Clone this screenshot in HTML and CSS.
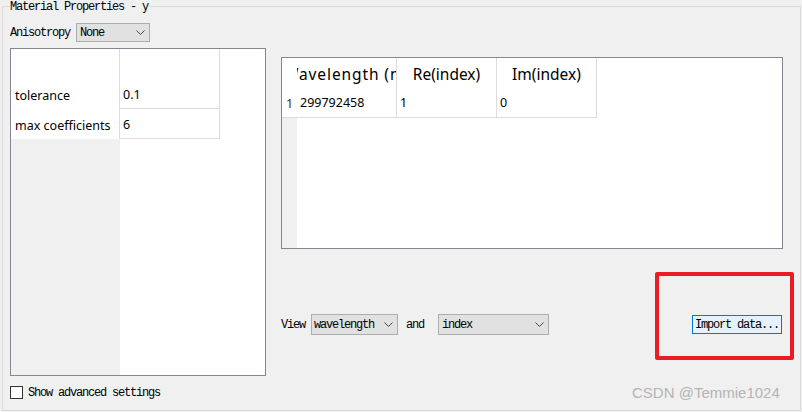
FILE: index.html
```html
<!DOCTYPE html>
<html>
<head>
<meta charset="utf-8">
<link rel="stylesheet" href="styles.css">
</head>
<body>
<div class="group">
  <div class="title">Material Properties - y</div>
  <div class="content">
    <div class="aniso-row">
      <span class="mono">Anisotropy</span>
      <div class="combo combo-aniso"><span class="mono">None</span><svg class="chev" width="9" height="5" viewBox="0 0 9 5"><polyline points="0.5,0.5 4.5,4.5 8.5,0.5" fill="none" stroke="#444" stroke-width="1"/></svg></div>
    </div>
    <div class="main">
      <div class="lp">
        <div class="c1"></div>
        <div class="c2"></div>
        <div class="c3"></div>
        <div class="c1 lbl">tolerance</div>
        <div class="c2 val bb">0.1</div>
        <div class="c3"></div>
        <div class="c1 lbl">max coefficients</div>
        <div class="c2 val bb">6</div>
        <div class="c3"></div>
        <div class="c1 fill"></div>
        <div class="c2 nb"></div>
        <div class="c3"></div>
      </div>
      <div class="right">
        <div class="rt">
          <div class="rvh"></div>
          <div class="rh rh-wl"><span>Wavelength (nm)</span></div>
          <div class="rh"><span>Re(index)</span></div>
          <div class="rh"><span>Im(index)</span></div>
          <div class="rfill"></div>
          <div class="rvh num">1</div>
          <div class="rc">299792458</div>
          <div class="rc">1</div>
          <div class="rc">0</div>
          <div class="rfill"></div>
          <div class="rvh gray"></div>
          <div class="rempty"></div>
        </div>
        <div class="bottom">
          <span class="mono">View</span>
          <div class="combo combo-wl"><span class="mono">wavelength</span><svg class="chev" width="9" height="5" viewBox="0 0 9 5"><polyline points="0.5,0.5 4.5,4.5 8.5,0.5" fill="none" stroke="#444" stroke-width="1"/></svg></div>
          <span class="mono and">and</span>
          <div class="combo combo-idx"><span class="mono">index</span><svg class="chev" width="9" height="5" viewBox="0 0 9 5"><polyline points="0.5,0.5 4.5,4.5 8.5,0.5" fill="none" stroke="#444" stroke-width="1"/></svg></div>
          <div class="btn mono">Import data...</div>
        </div>
      </div>
    </div>
    <div class="chk-row">
      <span class="chk"></span>
      <span class="mono">Show advanced settings</span>
    </div>
  </div>
</div>
<div class="redbox"></div>
<div class="wm">CSDN @Temmie1024</div>
</body>
</html>
```
FILE: styles.css
```css
html, body {
  margin: 0;
  padding: 0;
}
body {
  width: 802px;
  height: 412px;
  overflow: hidden;
  background: #f0f0f0;
  position: relative;
  font-family: "Noto Sans", sans-serif;
  color: #000;
}
.mono {
  font-family: "Liberation Mono", monospace;
  font-size: 12px;
  letter-spacing: -1.2px;
  line-height: 14px;
  white-space: pre;
  color: #000;
}
.group {
  position: relative;
  box-sizing: border-box;
  margin: 6px 1px 0 2px;
  height: 405px;
  border: 1px solid #dcdcdc;
}
.title {
  position: absolute;
  top: -7px;
  left: 7px;
  padding: 0 1px 0 0;
  background: #f0f0f0;
  font-family: "Liberation Mono", monospace;
  font-size: 12px;
  letter-spacing: -1.2px;
  line-height: 14px;
  white-space: pre;
}
.content {
  padding-left: 7px;
}
.aniso-row {
  margin-top: 16px;
  display: flex;
  align-items: center;
  gap: 6px;
  height: 19px;
}
.combo {
  box-sizing: border-box;
  display: flex;
  align-items: center;
  justify-content: space-between;
  background: #e1e1e1;
  border: 1px solid #adadad;
  padding: 0 4px 0 3px;
}
.combo-aniso {
  width: 74px;
  height: 19px;
}
.combo-wl {
  width: 87px;
  height: 21px;
  padding-left: 2px;
}
.combo-idx {
  width: 111px;
  height: 21px;
  padding-left: 3px;
}
.chev {
  display: block;
}
.main {
  display: flex;
  margin-top: 6px;
}
.lp {
  box-sizing: border-box;
  width: 256px;
  height: 328px;
  border: 1px solid #828790;
  background: #fff;
  display: grid;
  grid-template-columns: 109px 100px 1fr;
  grid-template-rows: 30px 30px 30px 1fr;
  font-size: 12.5px;
}
.c1 {
  border-right: 1px solid #dcdcdc;
}
.c2 {
  border-right: 1px solid #dcdcdc;
}
.c2.nb {
  border-right: none;
}
.c1.fill {
  border-right: none;
  background: #f0f0f0;
}
.bb {
  border-bottom: 1px solid #dcdcdc;
}
.lbl {
  display: flex;
  align-items: center;
  padding-left: 4px;
  padding-top: 2px;
}
.val {
  display: flex;
  align-items: center;
  padding-left: 3px;
  padding-top: 1px;
}
.right {
  margin-left: 15px;
  width: 502px;
  display: flex;
  flex-direction: column;
}
.rt {
  margin-top: 9px;
  box-sizing: border-box;
  width: 502px;
  height: 192px;
  border: 1px solid #828790;
  background: #fff;
  display: grid;
  grid-template-columns: 15px 100px 100px 100px 1fr;
  grid-template-rows: 30px 30px 1fr;
}
.rh {
  display: flex;
  justify-content: center;
  align-items: center;
  overflow: hidden;
  white-space: nowrap;
  border-right: 1px solid #dcdcdc;
  font-size: 15.5px;
  padding-top: 2px;
}
.rh span {
  flex: none;
}
.rh.rh-wl {
  justify-content: flex-start;
}
.rh.rh-wl span {
  margin-left: -13px;
  letter-spacing: 0.9px;
}
.rc {
  display: flex;
  align-items: center;
  border-right: 1px solid #dcdcdc;
  border-bottom: 1px solid #dcdcdc;
  padding-left: 3px;
  font-size: 12.5px;
}
.rvh.num {
  display: flex;
  align-items: center;
  justify-content: center;
  font-size: 12.5px;
  color: #333;
  border-bottom: 1px solid #dcdcdc;
  padding-top: 1px;
}
.rvh.gray {
  background: #f0f0f0;
}
.rempty {
  grid-column: 2 / 6;
}
.bottom {
  margin-top: 65px;
  display: flex;
  align-items: center;
  height: 21px;
}
.bottom .combo-wl {
  margin-left: 6px;
}
.bottom .and {
  margin-left: 8px;
}
.bottom .combo-idx {
  margin-left: 14px;
}
.btn {
  margin-left: auto;
  margin-right: 1px;
  box-sizing: border-box;
  width: 90px;
  height: 19px;
  background: #e5f1fb;
  border: 1px solid #0078d7;
  padding-left: 2px;
  display: flex;
  align-items: center;
}
.chk-row {
  margin-top: 10px;
  display: flex;
  align-items: center;
  gap: 5px;
  height: 13px;
}
.chk {
  box-sizing: border-box;
  width: 13px;
  height: 13px;
  border: 1px solid #333;
  background: #fff;
}
.redbox {
  position: absolute;
  left: 655px;
  top: 272px;
  width: 139px;
  height: 88px;
  box-sizing: border-box;
  border: 4px solid #ec1c24;
  border-radius: 2px;
}
.wm {
  position: absolute;
  left: 632px;
  top: 384px;
  font-family: "Liberation Sans", sans-serif;
  font-size: 15px;
  line-height: 18px;
  color: #b4b4b4;
  white-space: nowrap;
}
```
